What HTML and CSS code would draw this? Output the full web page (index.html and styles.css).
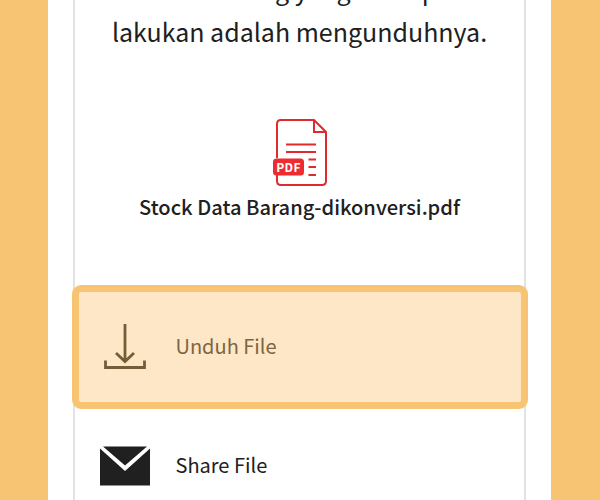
FILE: index.html
```
<!DOCTYPE html>
<html lang="id">
<head>
<meta charset="utf-8">
<title>Unduh File</title>
<link rel="stylesheet" href="styles.css">
</head>
<body>
<main class="screen">
  <section class="card">
    <p class="message">Maka sekarang yang Anda perlu<br>lakukan adalah mengunduhnya.</p>
    <svg class="pdf-icon" viewBox="0 0 56 68" fill="none" stroke="#e02a2c" stroke-width="2">
      <path d="M5 40V6q0-4 4-4H42L54 14V63q0 4-4 4H9q-4 0-4-4V57"/>
      <path d="M42 2V14H54M14 26.500H44M14 34H44M36.500 41.500H44M36.500 49H44M36.500 57H44"/>
      <rect x="1" y="40.500" width="31" height="17" rx="3.500" fill="#ee2b2e" stroke="none"/>
      <text x="4.300" y="53.500" class="pdf-label">PDF</text>
    </svg>
    <h1 class="filename">Stock Data Barang-dikonversi.pdf</h1>
    <div class="action action-active">
      <svg class="icon" viewBox="0 0 52 52" fill="none" stroke="#755d38" stroke-width="2.800">
        <path d="M26 4V41M17 33L26 41.500L35 33M6.500 40.500V47.500H45.500V40.500"/>
      </svg>
      <span>Unduh File</span>
    </div>
    <div class="action action-share">
      <svg class="icon" viewBox="0 0 52 52">
        <path fill="#202020" d="M4 6.500H48L26 25.500ZM1 8.500L26 31L51 8.500V45.500H1Z"/>
      </svg>
      <span>Share File</span>
    </div>
  </section>
</main>
</body>
</html>
```
FILE: styles.css
```
* { box-sizing: border-box; }
body {
  margin: 0;
  height: 500px;
  overflow: hidden;
  background: #f7c474;
  color: #202020;
  font-family: "Noto Sans CJK SC", "Noto Sans", sans-serif;
}
.screen {
  width: 503px;
  height: 500px;
  margin-left: 48px;
  padding: 0 25px;
  background: #fff;
  overflow: hidden;
}
.card {
  display: flex;
  flex-direction: column;
  align-items: center;
  height: 500px;
  border: solid #e2e2e2;
  border-width: 0 2px;
}
.message {
  flex: none;
  margin: -32px 0 0;
  height: 150px;
  font-size: 25px;
  line-height: 42px;
  text-align: center;
  white-space: nowrap;
}
.pdf-icon { width: 56px; height: 68px; flex: none; }
.pdf-label {
  fill: #fff;
  stroke: none;
  font-size: 12px;
  font-weight: 700;
  letter-spacing: .3px;
}
.filename {
  flex: none;
  margin: 6px 0 63px;
  font-size: 20.1px;
  font-weight: 500;
  line-height: 30px;
  white-space: nowrap;
}
.action {
  display: flex;
  flex: none;
  align-items: center;
  gap: 25px;
  width: 456px;
  height: 124px;
  font-size: 20px;
}
.action span { padding-bottom: 2px; }
.action-active {
  padding: 0 20px 2px;
  border: 7px solid #f7c474;
  border-radius: 9px;
  background: #fde7c7;
  color: #7d6543;
}
.action-active span { padding-bottom: 1px; }
.action-share {
  height: 113px;
  padding: 0 27px;
}
.icon { width: 52px; height: 52px; flex: none; }
```
